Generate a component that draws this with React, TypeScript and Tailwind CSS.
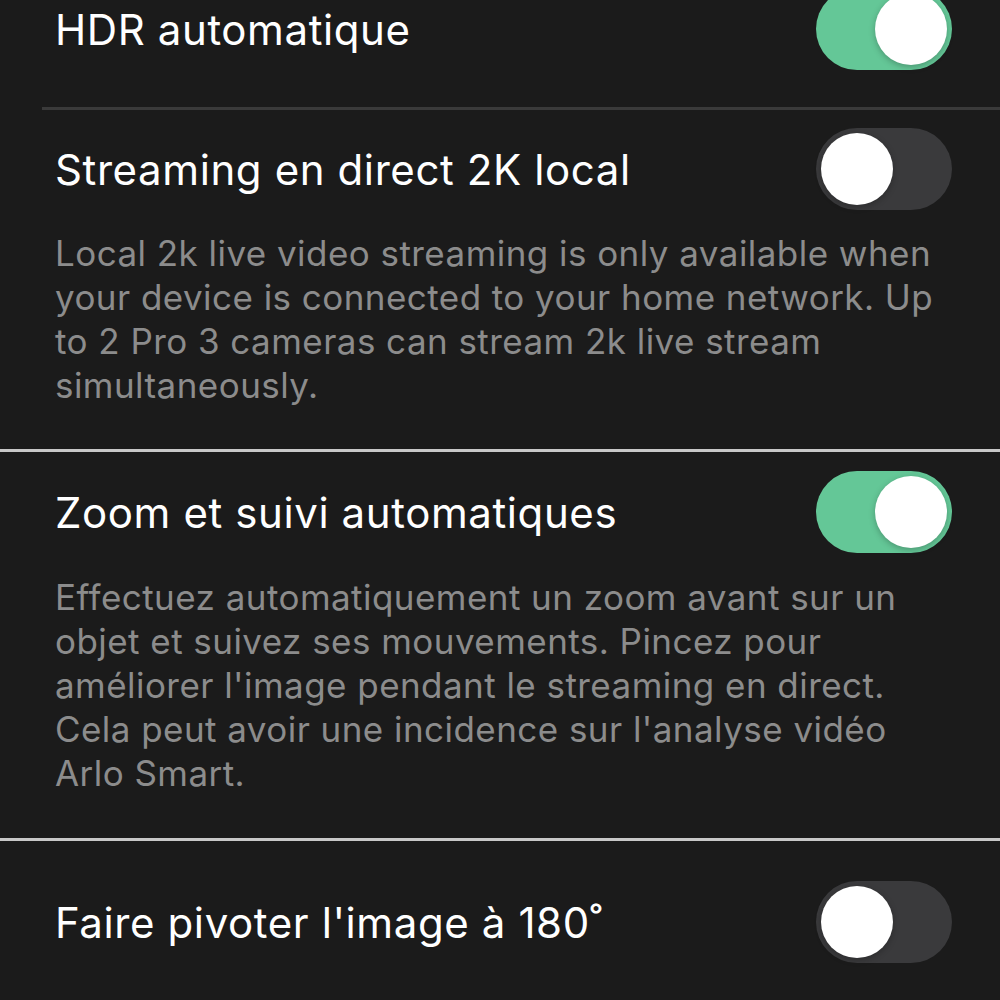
import React from 'react'

function Toggle({ on }: { on: boolean }) {
  return (
    <div
      className={`relative w-[136px] h-[82px] rounded-full shrink-0 ${on ? 'bg-[#64c797]' : 'bg-[#3a3a3c]'}`}
    >
      <div
        className={`absolute top-[5px] w-[72px] h-[72px] rounded-full bg-white shadow-[0_2px_6px_rgba(0,0,0,0.25)] ${on ? 'right-[5px]' : 'left-[5px]'}`}
      />
    </div>
  )
}

function Row({ title, on }: { title: string; on: boolean }) {
  return (
    <div className="flex items-center justify-between h-[82px] pl-[55px] pr-[48px]">
      <span className="text-[42px] text-white tracking-[0.6px]">{title}</span>
      <Toggle on={on} />
    </div>
  )
}

export default function App() {
  return (
    <div
      className="w-[1000px] h-[1000px] overflow-hidden bg-[#1b1b1b]"
      style={{ fontFamily: 'Inter, "Noto Sans", sans-serif' }}
    >
      <div className="mt-[-12px]">
        <Row title="HDR automatique" on={true} />
      </div>
      <div className="mt-[37px] ml-[42px] h-[3px] bg-[#3a3a3a]" />

      <div className="pt-[18px] pb-[42px]">
        <Row title="Streaming en direct 2K local" on={false} />
        <p className="mt-[21px] pl-[55px] pr-[20px] text-[35px] leading-[44px] tracking-[0.45px] text-[#8c8c8c]">
          Local 2k live video streaming is only available when
          <br />
          your device is connected to your home network. Up
          <br />
          to 2 Pro 3 cameras can stream 2k live stream
          <br />
          simultaneously.
        </p>
      </div>
      <div className="h-[3px] bg-[#c8c8c8]" />

      <div className="pt-[19px] pb-[43px]">
        <Row title="Zoom et suivi automatiques" on={true} />
        <p className="mt-[22px] pl-[55px] pr-[20px] text-[35px] leading-[44px] tracking-[0.45px] text-[#8c8c8c]">
          Effectuez automatiquement un zoom avant sur un
          <br />
          objet et suivez ses mouvements. Pincez pour
          <br />
          améliorer l'image pendant le streaming en direct.
          <br />
          Cela peut avoir une incidence sur l'analyse vidéo
          <br />
          Arlo Smart.
        </p>
      </div>
      <div className="h-[3px] bg-[#c8c8c8]" />

      <div className="pt-[40px]">
        <Row title="Faire pivoter l'image à 180˚" on={false} />
      </div>
    </div>
  )
}
